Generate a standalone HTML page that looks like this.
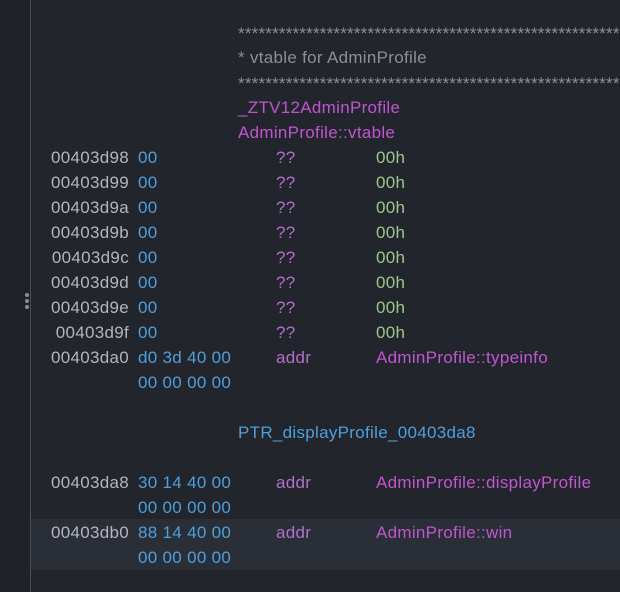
<!DOCTYPE html>
<html><head><meta charset="utf-8"><style>
html,body{margin:0;padding:0;}
body{width:620px;height:592px;background:#22252c;position:relative;overflow:hidden;font-family:"Liberation Sans",sans-serif;font-size:17px;letter-spacing:0.3px;}
.gut{position:absolute;left:0;top:0;width:30px;height:592px;background:#202228;}
.div{position:absolute;left:30px;top:0;width:1px;height:592px;background:#4a4d55;}
.hl{position:absolute;left:31px;top:519px;width:589px;height:51px;background:#2a2e37;}
.dot{position:absolute;left:25px;width:4px;height:4px;border-radius:2px;background:#8a8d94;}
.t{position:absolute;white-space:pre;line-height:25px;height:25px;}
.ad{right:491px;color:#b3b6bc;text-align:right;}
.by{left:138px;color:#4f9fdc;}
.mn{left:276px;color:#b36fcb;}
.op{left:376px;color:#c056cf;}
.gr{left:376px;color:#9cc78c;}
.lb{left:238px;color:#c056cf;}
.cm{left:238px;color:#8c8f96;}
.bl{left:238px;color:#4f9fdc;}
</style></head><body>
<div class="gut"></div><div class="div"></div><div class="hl"></div>
<div class="dot" style="top:293px"></div><div class="dot" style="top:299px"></div><div class="dot" style="top:305px"></div>
<div class="t cm" style="top:21px;letter-spacing:0.2px">************************************************************</div>
<div class="t cm" style="top:45px">* vtable for AdminProfile</div>
<div class="t cm" style="top:71px;letter-spacing:0.2px">************************************************************</div>
<div class="t lb" style="top:95px">_ZTV12AdminProfile</div>
<div class="t lb" style="top:120px">AdminProfile::vtable</div>

<div class="t ad" style="top:145px">00403d98</div><div class="t by" style="top:145px">00</div><div class="t mn" style="top:145px">??</div><div class="t gr" style="top:145px">00h</div>
<div class="t ad" style="top:170px">00403d99</div><div class="t by" style="top:170px">00</div><div class="t mn" style="top:170px">??</div><div class="t gr" style="top:170px">00h</div>
<div class="t ad" style="top:195px">00403d9a</div><div class="t by" style="top:195px">00</div><div class="t mn" style="top:195px">??</div><div class="t gr" style="top:195px">00h</div>
<div class="t ad" style="top:220px">00403d9b</div><div class="t by" style="top:220px">00</div><div class="t mn" style="top:220px">??</div><div class="t gr" style="top:220px">00h</div>
<div class="t ad" style="top:245px">00403d9c</div><div class="t by" style="top:245px">00</div><div class="t mn" style="top:245px">??</div><div class="t gr" style="top:245px">00h</div>
<div class="t ad" style="top:270px">00403d9d</div><div class="t by" style="top:270px">00</div><div class="t mn" style="top:270px">??</div><div class="t gr" style="top:270px">00h</div>
<div class="t ad" style="top:295px">00403d9e</div><div class="t by" style="top:295px">00</div><div class="t mn" style="top:295px">??</div><div class="t gr" style="top:295px">00h</div>
<div class="t ad" style="top:320px">00403d9f</div><div class="t by" style="top:320px">00</div><div class="t mn" style="top:320px">??</div><div class="t gr" style="top:320px">00h</div>
<div class="t ad" style="top:345px">00403da0</div><div class="t by" style="top:345px">d0 3d 40 00</div><div class="t mn" style="top:345px">addr</div><div class="t op" style="top:345px">AdminProfile::typeinfo</div>
<div class="t by" style="top:370px">00 00 00 00</div>
<div class="t bl" style="top:420px">PTR_displayProfile_00403da8</div>
<div class="t ad" style="top:470px">00403da8</div><div class="t by" style="top:470px">30 14 40 00</div><div class="t mn" style="top:470px">addr</div><div class="t op" style="top:470px">AdminProfile::displayProfile</div>
<div class="t by" style="top:495px">00 00 00 00</div>
<div class="t ad" style="top:520px">00403db0</div><div class="t by" style="top:520px">88 14 40 00</div><div class="t mn" style="top:520px">addr</div><div class="t op" style="top:520px">AdminProfile::win</div>
<div class="t by" style="top:545px">00 00 00 00</div>
</body></html>
